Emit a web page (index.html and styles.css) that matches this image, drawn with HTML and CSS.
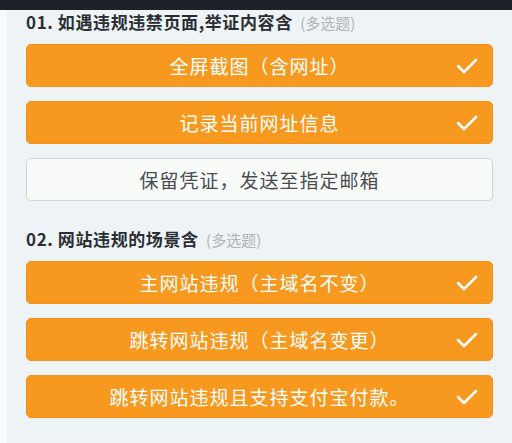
FILE: index.html
```html
<!DOCTYPE html>
<html>
<head>
  <title>举证选项</title>
  <meta http-equiv="Content-Type" content="text/html; charset=UTF-8">
  <link rel="stylesheet" href="styles.css">
</head>
<body>
  <div class="status-bar"></div>

  <div class="page">
    <div class="panel">
      <div class="question">
        <h2>01. 如遇违规违禁页面,举证内容含 <span class="hint">(多选题)</span></h2>
        <div class="option checked">
          <span class="label">全屏截图（含网址）</span>
          <svg class="check" width="22" height="16" viewBox="0 0 22 16"><polyline points="2,8 8,14 20,2"/></svg>
        </div>
        <div class="option checked">
          <span class="label">记录当前网址信息</span>
          <svg class="check" width="22" height="16" viewBox="0 0 22 16"><polyline points="2,8 8,14 20,2"/></svg>
        </div>
        <div class="option">
          <span class="label">保留凭证，发送至指定邮箱</span>
        </div>
      </div>

      <div class="question">
        <h2>02. 网站违规的场景含 <span class="hint">(多选题)</span></h2>
        <div class="option checked">
          <span class="label">主网站违规（主域名不变）</span>
          <svg class="check" width="22" height="16" viewBox="0 0 22 16"><polyline points="2,8 8,14 20,2"/></svg>
        </div>
        <div class="option checked">
          <span class="label">跳转网站违规（主域名变更）</span>
          <svg class="check" width="22" height="16" viewBox="0 0 22 16"><polyline points="2,8 8,14 20,2"/></svg>
        </div>
        <div class="option checked">
          <span class="label">跳转网站违规且支持支付宝付款。</span>
          <svg class="check" width="22" height="16" viewBox="0 0 22 16"><polyline points="2,8 8,14 20,2"/></svg>
        </div>
      </div>
    </div>
  </div>
</body>
</html>
```

FILE: styles.css
```css
body {
  margin: 0;
  padding: 0;
  font-family: "Noto Sans CJK SC", "Noto Sans", sans-serif;
  background-color: #f8fafb;
}

.status-bar {
  height: 10px;
  background-color: #1e2228;
}

.page {
  padding-left: 7px;
}

.panel {
  background-color: #eef3f6;
  padding: 1px 19px 26px 19px;
}

.question {
  margin-bottom: 27px;
}

.question:last-child {
  margin-bottom: 0;
}

.question h2 {
  margin: 0 0 11px 0;
  height: 22px;
  line-height: 22px;
  font-size: 17px;
  font-weight: bold;
  letter-spacing: 0.6px;
  color: #2b2f33;
}

.question h2 .hint {
  margin-left: 3px;
  font-size: 15px;
  font-weight: normal;
  letter-spacing: 0;
  color: #aeb3b7;
}

.option {
  display: grid;
  grid-template-columns: 1fr auto 1fr;
  align-items: center;
  height: 43px;
  margin-bottom: 14px;
  box-sizing: border-box;
  border-radius: 5px;
  background-color: #f8fbf8;
  border: 1px solid #cfd5d4;
  color: #4a4d50;
}

.option:last-child {
  margin-bottom: 0;
}

.option .label {
  grid-column: 2;
  font-size: 19px;
  letter-spacing: 1px;
  line-height: 1;
}

.option.checked {
  background-color: #f7991f;
  border-color: #f29319;
  color: #ffffff;
}

.option .check {
  grid-column: 3;
  justify-self: end;
  margin-right: 14px;
  fill: none;
  stroke: #ffffff;
  stroke-width: 2.5;
  stroke-linecap: round;
  stroke-linejoin: round;
}
```
